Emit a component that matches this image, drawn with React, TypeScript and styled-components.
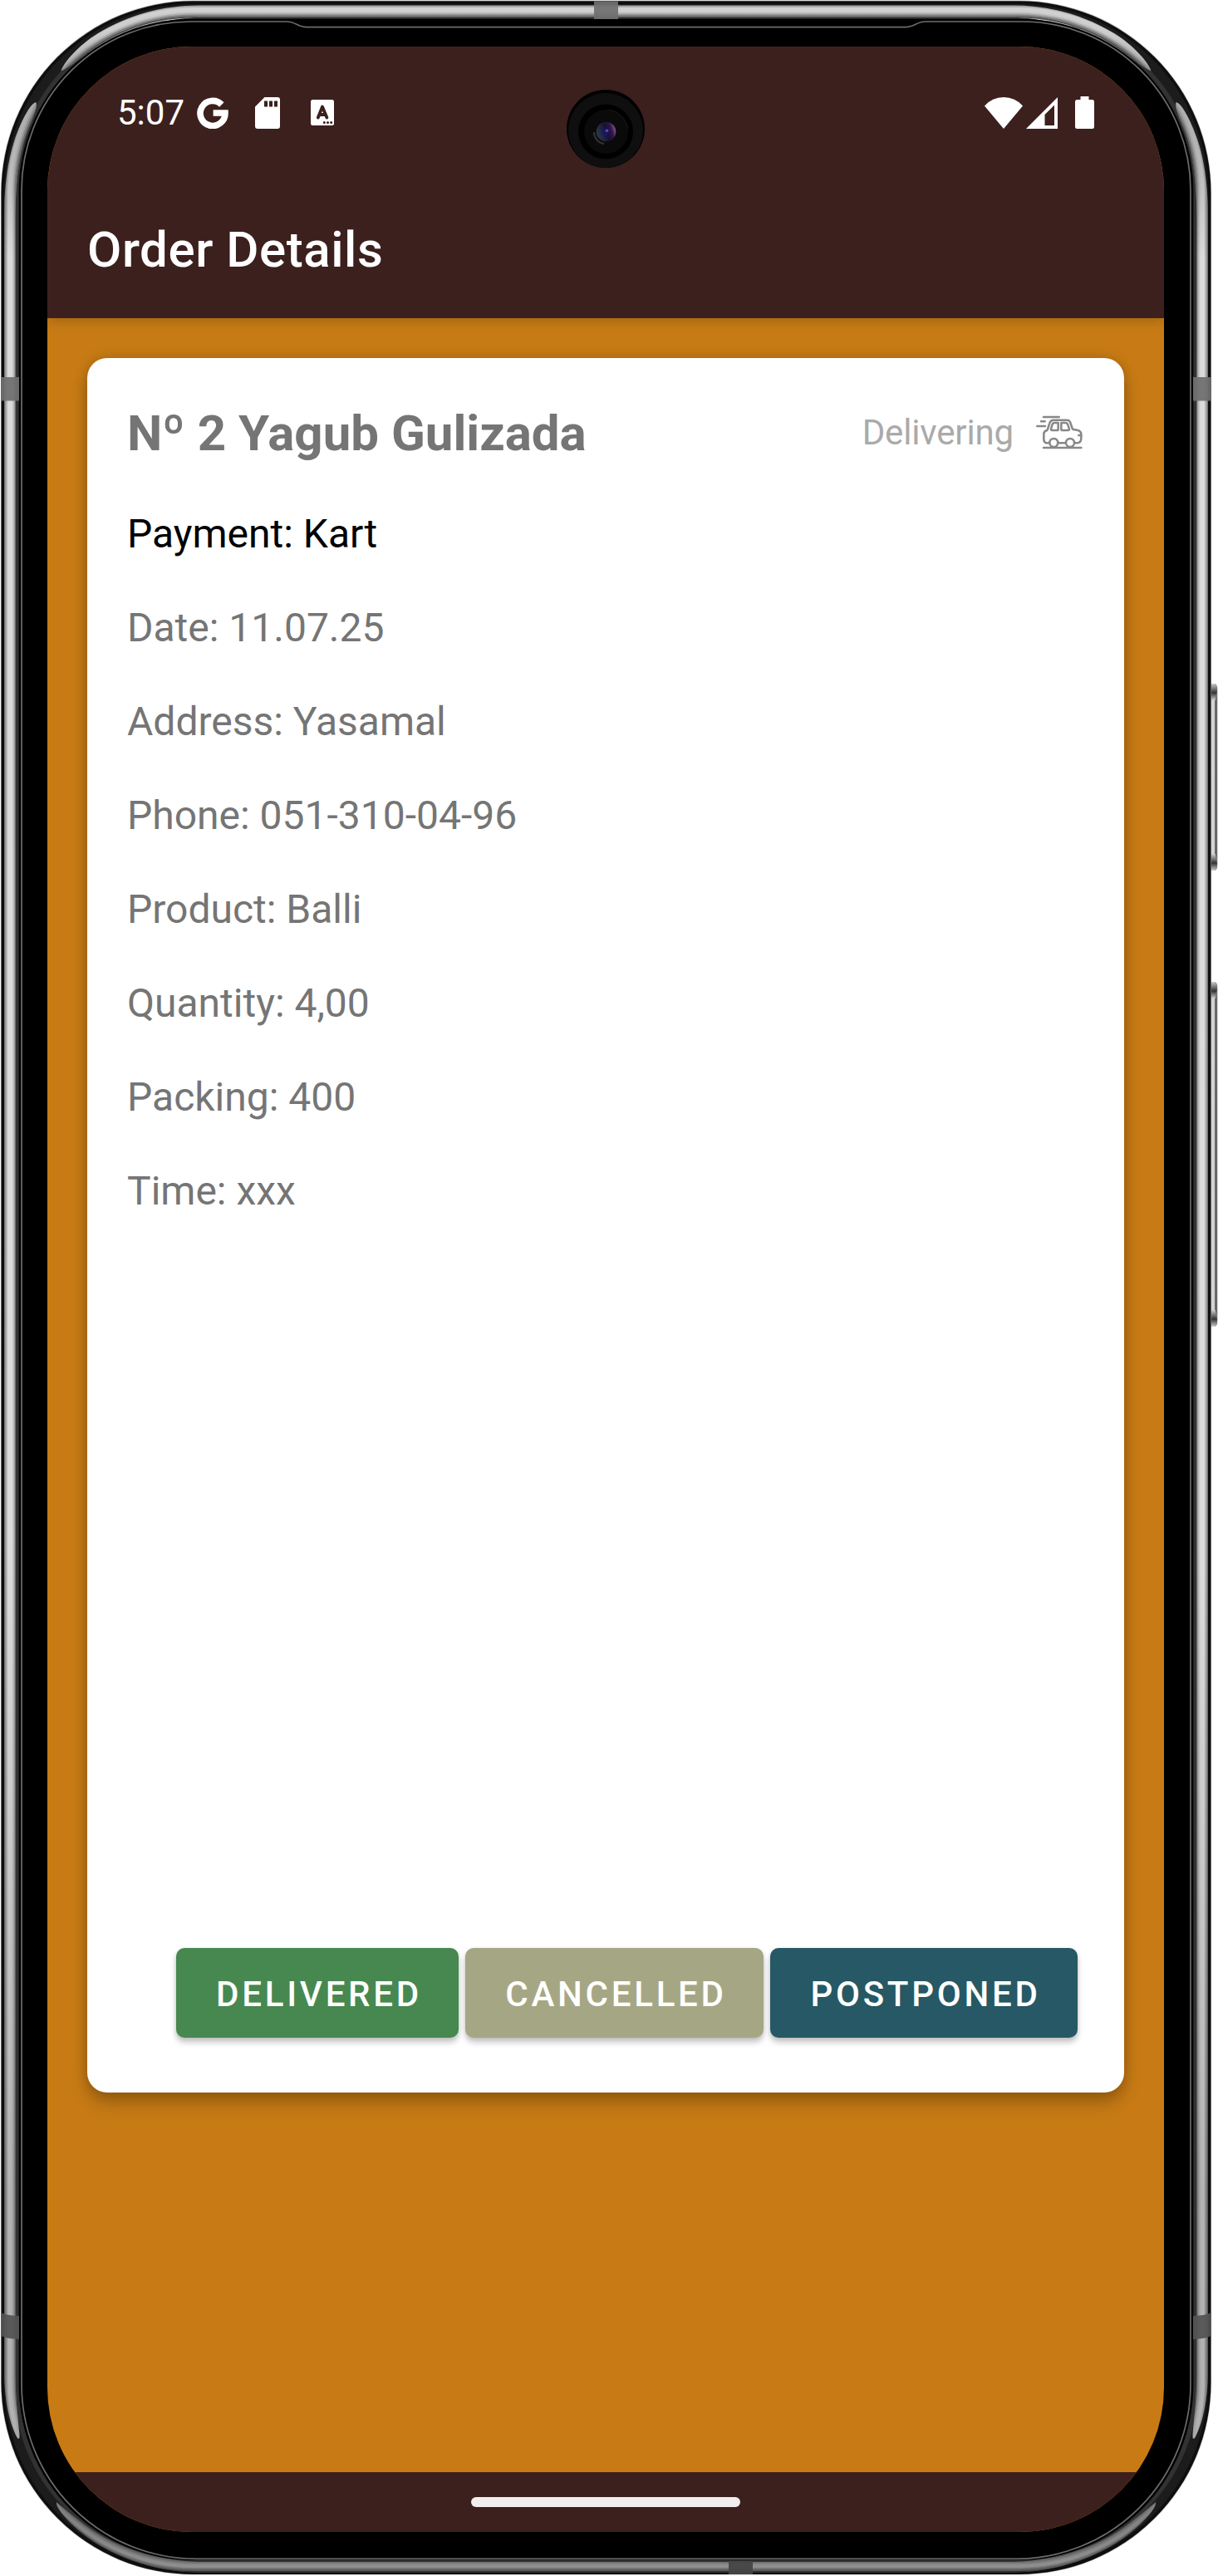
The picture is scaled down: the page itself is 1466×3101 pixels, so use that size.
import React from "react";
import styled, { createGlobalStyle } from "styled-components";

const GlobalStyle = createGlobalStyle`
  *, *::before, *::after { box-sizing: border-box; }
  html, body { margin: 0; padding: 0; background: #ffffff; }
  body { font-family: Roboto, "Open Sans", sans-serif; }
`;

const brown = "#3c201e";
const amber = "#c87b15";

const Device = styled.div`
  position: relative;
  width: 1466px;
  height: 3101px;
  padding: 56px 65px 53px 57px;
  overflow: hidden;
`;

const FrameArt = styled.svg`
  position: absolute;
  inset: 0;
  width: 1466px;
  height: 3101px;
`;

const Screen = styled.main`
  position: relative;
  display: flex;
  flex-direction: column;
  width: 1344px;
  height: 2992px;
  border-radius: 174px;
  overflow: hidden;
  background: ${amber};
`;

const TopArea = styled.header`
  position: relative;
  flex: none;
  height: 327px;
  background: ${brown};
  box-shadow: 0 3px 14px rgba(0, 0, 0, 0.2);
`;

const StatusBar = styled.div`
  display: flex;
  justify-content: space-between;
  align-items: center;
  height: 159px;
  padding: 0 84px;
  color: #ffffff;
`;

const StatusGroup = styled.div`
  display: flex;
  align-items: center;
`;

const Clock = styled.span`
  width: 96px;
  font-size: 42px;
  line-height: 50px;
`;

const Glyph = styled.svg<{ $w: number; $h: number; $gap?: number }>`
  flex: none;
  display: block;
  width: ${(p) => p.$w}px;
  height: ${(p) => p.$h}px;
  margin-left: ${(p) => p.$gap ?? 0}px;
`;

const AppBar = styled.div`
  display: flex;
  align-items: center;
  height: 168px;
  padding: 4px 0 0 48px;
`;

const AppTitle = styled.h1`
  margin: 0;
  font-size: 60px;
  font-weight: 500;
  line-height: 70px;
  letter-spacing: 0.55px;
  color: #ffffff;
`;

const Content = styled.section`
  flex: 1;
  padding: 48px;
`;

const Card = styled.article`
  display: flex;
  flex-direction: column;
  height: 2088px;
  padding: 56px 48px 66px;
  border-radius: 24px;
  background: #ffffff;
  box-shadow: 0 14px 20px rgba(0, 0, 0, 0.2), 0 0 16px rgba(0, 0, 0, 0.18);
`;

const CardHeader = styled.div`
  display: flex;
  justify-content: space-between;
  align-items: center;
  height: 70px;
  margin-bottom: 29px;
`;

const Customer = styled.h2`
  margin: 0;
  font-size: 60px;
  font-weight: 700;
  line-height: 70px;
  color: #757575;
`;

const Status = styled.div`
  display: flex;
  align-items: center;
  padding-right: 2px;
  margin-top: -3px;
`;

const StatusText = styled.span`
  padding-top: 1px;
  font-size: 42px;
  line-height: 50px;
  letter-spacing: -0.15px;
  color: #aaaaaa;
`;

const Fields = styled.div`
  display: flex;
  flex-direction: column;
`;

const Field = styled.div<{ $strong?: boolean }>`
  height: 113px;
  font-size: 48px;
  line-height: 113px;
  color: ${(p) => (p.$strong ? "#000000" : "#757575")};
`;

const Actions = styled.div`
  display: flex;
  justify-content: flex-end;
  gap: 8px;
  margin-top: auto;
  padding-right: 8px;
`;

const ActionButton = styled.button<{ $color: string; $width: number }>`
  width: ${(p) => p.$width}px;
  height: 108px;
  padding: 3px 0 0 4px;
  border: 0;
  border-radius: 10px;
  background: ${(p) => p.$color};
  box-shadow: 0 6px 7px rgba(0, 0, 0, 0.2), 0 1px 5px rgba(0, 0, 0, 0.12);
  font-family: inherit;
  font-size: 42px;
  font-weight: 500;
  line-height: 50px;
  letter-spacing: 3.75px;
  color: #ffffff;
`;

const NavBar = styled.footer`
  display: flex;
  justify-content: center;
  flex: none;
  height: 72px;
  padding-top: 30px;
  background: ${brown};
`;

const HomeHandle = styled.div`
  width: 324px;
  height: 12px;
  border-radius: 6px;
  background: #f3eeee;
`;

const CameraArt = styled.svg`
  position: absolute;
  left: 681px;
  top: 107px;
  width: 96px;
  height: 96px;
`;

const RIM_TOP_LEFT =
  "M73.5 85.5 C76 76 95 54 118 40 C155 18 195 6.5 240 6.5 H729.5 V20.5 H247 C195 21 150 38 117 58 C100 68 85 80 73.5 85.5 Z";
const RIM_SIDE_LEFT =
  "M43.5 123 C36 124 23 151 17 170 C9 195 5 225 5 262 V2850 C5 2885 10 2915 21 2935 Q24 2938 23.5 2930 C20 2895 18.5 2880 18.5 2850 V267 C18.5 230 21 200 29 170 C35 150 46 132 43.5 123 Z";
const RIM_BOTTOM_LEFT =
  "M68 3012 C66 3020 90 3046 120 3064 C155 3084 195 3096.5 240 3096.5 H729.5 V3084 H240 C200 3083 160 3072 130 3057 C105 3044 85 3026 68 3012 Z";

const offsets = [
  { d: 2.5, c: "#000", o: 0.6, w: 3 },
  { d: 4.8, c: "#000", o: 0.3, w: 2 },
  { d: 6.5, c: "#000", o: 0.12, w: 2 },
  { d: 10, c: "#fff", o: 0.12, w: 4 },
  { d: 15, c: "#000", o: 0.14, w: 2 },
  { d: 17, c: "#000", o: 0.36, w: 2.2 },
  { d: 19, c: "#000", o: 0.6, w: 2 },
];

const Frame = () => (
  <FrameArt viewBox="0 0 1466 3101" aria-hidden="true">
    <defs>
      <linearGradient id="metal" gradientUnits="userSpaceOnUse" x1="0" y1="0" x2="0" y2="3101">
        <stop offset="0" stopColor="#cccccc" />
        <stop offset="0.012" stopColor="#c8c8c8" />
        <stop offset="0.03" stopColor="#9c9c9c" />
        <stop offset="0.06" stopColor="#adadad" />
        <stop offset="0.1" stopColor="#d6d6d6" />
        <stop offset="0.6" stopColor="#d8d8d8" />
        <stop offset="0.85" stopColor="#aaaaaa" />
        <stop offset="0.94" stopColor="#a8a8a8" />
        <stop offset="0.97" stopColor="#6b6b6b" />
        <stop offset="1" stopColor="#828282" />
      </linearGradient>
      <clipPath id="rimLight">
        <path d={RIM_TOP_LEFT} />
        <path d={RIM_SIDE_LEFT} />
        <path d={RIM_BOTTOM_LEFT} />
        <path d={RIM_TOP_LEFT} transform="translate(1459 0) scale(-1 1)" />
        <path d={RIM_SIDE_LEFT} transform="translate(1459 0) scale(-1 1)" />
        <path d={RIM_BOTTOM_LEFT} transform="translate(1459 0) scale(-1 1)" />
      </clipPath>
      <linearGradient id="key" x1="0" x2="1" y1="0" y2="0">
        <stop offset="0" stopColor="#cfcfcf" />
        <stop offset="0.55" stopColor="#d8d8d8" />
        <stop offset="0.8" stopColor="#444444" />
        <stop offset="1" stopColor="#aaaaaa" />
      </linearGradient>
      <linearGradient id="keyTop" x1="0" x2="0" y1="0" y2="1">
        <stop offset="0" stopColor="#cccccc" />
        <stop offset="0.55" stopColor="#333333" />
        <stop offset="1" stopColor="#d0d0d0" />
      </linearGradient>
    </defs>
    {[
      [823, 225],
      [1182, 415],
    ].map(([y, h]) => (
      <g key={y}>
        <path d={`M1456 ${y}h5q4.500 0 4.500 8v${h - 16}q0 8-4.500 8h-5z`} fill="url(#key)" />
        <path d={`M1456 ${y}h5q3.500 0 4 8l-2 12h-7z`} fill="url(#keyTop)" />
        <path d={`M1456 ${y + h}h5q3.500 0 4-8l-2-12h-7z`} fill="url(#keyTop)" />
      </g>
    ))}
    <rect x="1" y="0.500" width="1457" height="3099" rx="231" fill="#b9bdba" />
    <rect x="1.500" y="1.200" width="1456" height="3097.800" rx="231" fill="#0e0e0e" />
    <rect x="11" y="11" width="1437" height="3078" rx="221" fill="none" stroke="#1c1c1c" strokeWidth="12" />
    <rect x="19.500" y="19.500" width="1420" height="3062" rx="212" fill="none" stroke="#323232" strokeWidth="6" />
    <g clipPath="url(#rimLight)">
      <rect width="1466" height="3101" fill="url(#metal)" />
      {offsets.map((s) => (
        <rect
          key={s.d}
          x={1.5 + s.d}
          y={1.5 + s.d}
          width={1456 - 2 * s.d}
          height={3097.5 - 2 * s.d}
          rx={231 - s.d}
          fill="none"
          stroke={s.c}
          strokeOpacity={s.o}
          strokeWidth={s.w}
        />
      ))}
    </g>
    <g fill="#707070" fillOpacity="0.94">
      <rect x="715" y="1.500" width="29" height="22" />
      <rect x="1.500" y="454" width="21.500" height="28.500" />
      <rect x="1436" y="454" width="21.500" height="28.500" />
      <path fill="#545454" d="M1.500 2784 Q8 2787.500 23 2788 V2816 Q8 2815.500 1.500 2812Z" />
      <path fill="#545454" d="M1457.500 2784 Q1451 2787.500 1436 2788 V2816 Q1451 2815.500 1457.500 2812Z" />
      <rect fill="#454545" x="877" y="3083" width="29" height="16" />
    </g>
    <path
      fill="#000"
      d="M23 229 A206 206 0 0 1 229 23 H1230 A206 206 0 0 1 1436 229 V2872 A210 210 0 0 1 1226 3082 H233 A210 210 0 0 1 23 2872Z"
    />
    <path
      fill="none"
      stroke="#6c6c6c"
      strokeWidth="1.700"
      d="M345 26 H229 A203 203 0 0 0 26 229 V2870 A210 210 0 0 0 236 3080.300 H1223 A210 210 0 0 0 1433 2870 V229 A203 203 0 0 0 1230 26 H1114 C1103 26 1101 32.700 1090 32.700 H369 C358 32.700 356 26 345 26Z"
    />
  </FrameArt>
);

const Camera = () => (
  <CameraArt viewBox="0 0 96 96" aria-hidden="true">
    <defs>
      <linearGradient id="lens" x1="0" y1="0.600" x2="1" y2="0.300">
        <stop offset="0" stopColor="#2b3d4c" />
        <stop offset="0.5" stopColor="#171334" />
        <stop offset="0.75" stopColor="#2c1544" />
        <stop offset="1" stopColor="#8b5a9a" />
      </linearGradient>
    </defs>
    <circle cx="48" cy="48" r="47" fill="#000" />
    <circle cx="48" cy="50" r="45" fill="#0f0f0f" />
    <circle cx="48" cy="51.500" r="33" fill="#000" />
    <circle cx="48.500" cy="51.500" r="26.500" fill="#0a0a0a" />
    <path d="M52 25.300a26.500 26.500 0 0 1 22.500 23" stroke="#1b1b1b" strokeWidth="1" fill="none" />
    <path d="M34 52a14 14 0 0 0 12 14" stroke="#2f2f2f" strokeWidth="2.500" fill="none" />
    <circle cx="48.500" cy="51.500" r="11.800" fill="url(#lens)" />
    <circle cx="47" cy="53" r="4.500" fill="#23157a" fillOpacity="0.450" />
    <circle cx="49.500" cy="50.300" r="2.200" fill="#3a20c4" fillOpacity="0.850" />
    <circle cx="49.500" cy="50.300" r="0.900" fill="#a58bff" />
  </CameraArt>
);

const GoogleIcon = () => (
  <Glyph $w={38} $h={38} viewBox="0 0 38 38">
    <path
      d="M29.500 9 A15 15 0 1 0 33.700 19 H19.300"
      fill="none"
      stroke="#fff"
      strokeWidth="7.600"
      transform="translate(0.300 0)"
    />
  </Glyph>
);

const SdIcon = () => (
  <Glyph $w={30} $h={38} $gap={32} viewBox="0 0 30 38">
    <path
      fill="#fff"
      fillRule="evenodd"
      d="M11.500 0H27q3 0 3 3v32q0 3-3 3H3q-3 0-3-3V11.500ZM11 4.500v7h4v-7Zm6 0v7h4v-7Zm6 0v7h4v-7Z"
    />
  </Glyph>
);

const LetterIcon = () => (
  <Glyph $w={28} $h={31} $gap={37} viewBox="0 0 28 31">
    <rect width="28" height="31" rx="2.500" fill="#fff" />
    <path
      d="M8.800 21.500 14 8.500 19.400 21.500M10.500 18h7"
      fill="none"
      stroke={brown}
      strokeWidth="3.800"
      strokeLinecap="round"
      strokeLinejoin="round"
    />
    <g fill={brown}>
      <circle cx="16.300" cy="27.500" r="1.500" />
      <circle cx="20.500" cy="27.500" r="1.500" />
      <circle cx="24.700" cy="27.500" r="1.500" />
    </g>
  </Glyph>
);

const WifiIcon = () => (
  <Glyph $w={46} $h={38} viewBox="0 0 46 38">
    <path d="M0 10.500Q9 0 23 0t23 10.500L23 38Z" fill="#fff" />
  </Glyph>
);

const SignalIcon = () => (
  <Glyph $w={38} $h={38} $gap={4} viewBox="0 0 38 38">
    <path fill="#fff" fillRule="evenodd" d="M38 0V38H0ZM34 9.500 22.500 21V34H34Z" />
  </Glyph>
);

const BatteryIcon = () => (
  <Glyph $w={23} $h={39} $gap={21} viewBox="0 0 23 39">
    <path fill="#fff" d="M6.500 0h10v4H20.500q2.500 0 2.500 2.500v30q0 2.500-2.500 2.500h-18Q0 39 0 36.500v-30Q0 4 2.500 4h4Z" />
  </Glyph>
);

const CarIcon = () => (
  <Glyph $w={56} $h={42} $gap={27} viewBox="0 0 168 126">
    <g fill="none" stroke="#888888" strokeWidth="7.600" strokeLinecap="round" strokeLinejoin="round">
      <path d="M27 6H83M18 22H32M4 39H33M27 117H163" />
      <path d="M48 100H36Q28 96 28 88V66Q29 56 41 53L49 28Q52 17 63 17H112Q121 17 124 27L132 50 148 53Q163 56 163 68V84Q162 99 149 100H139M80 100H107" />
      <circle cx="64" cy="99" r="15" />
      <circle cx="123" cy="99" r="15" />
      <path d="M80 27V50Q80 54 75 54H58Q53 54 54 49L59 32Q61 27 67 27ZM91 27H107Q112 27 114 32L120 49Q120 54 115 54H96Q91 54 91 50Z" />
      <path d="M162 72H154" />
    </g>
  </Glyph>
);

const fields = [
  "Payment: Kart",
  "Date: 11.07.25",
  "Address: Yasamal",
  "Phone: 051-310-04-96",
  "Product: Balli",
  "Quantity: 4,00",
  "Packing: 400",
  "Time: xxx",
];

const actions = [
  { label: "DELIVERED", color: "#468850", width: 340 },
  { label: "CANCELLED", color: "#a5a784", width: 359 },
  { label: "POSTPONED", color: "#265865", width: 370 },
];

export default function App() {
  return (
    <>
      <GlobalStyle />
      <Device>
        <Frame />
        <Screen>
          <TopArea>
            <StatusBar>
              <StatusGroup>
                <Clock>5:07</Clock>
                <GoogleIcon />
                <SdIcon />
                <LetterIcon />
              </StatusGroup>
              <StatusGroup>
                <WifiIcon />
                <SignalIcon />
                <BatteryIcon />
              </StatusGroup>
            </StatusBar>
            <AppBar>
              <AppTitle>Order Details</AppTitle>
            </AppBar>
          </TopArea>
          <Content>
            <Card>
              <CardHeader>
                <Customer>Nº 2 Yagub Gulizada</Customer>
                <Status>
                  <StatusText>Delivering</StatusText>
                  <CarIcon />
                </Status>
              </CardHeader>
              <Fields>
                {fields.map((text, i) => (
                  <Field key={text} $strong={i === 0}>
                    {text}
                  </Field>
                ))}
              </Fields>
              <Actions>
                {actions.map((a) => (
                  <ActionButton key={a.label} $color={a.color} $width={a.width}>
                    {a.label}
                  </ActionButton>
                ))}
              </Actions>
            </Card>
          </Content>
          <NavBar>
            <HomeHandle />
          </NavBar>
        </Screen>
        <Camera />
      </Device>
    </>
  );
}
